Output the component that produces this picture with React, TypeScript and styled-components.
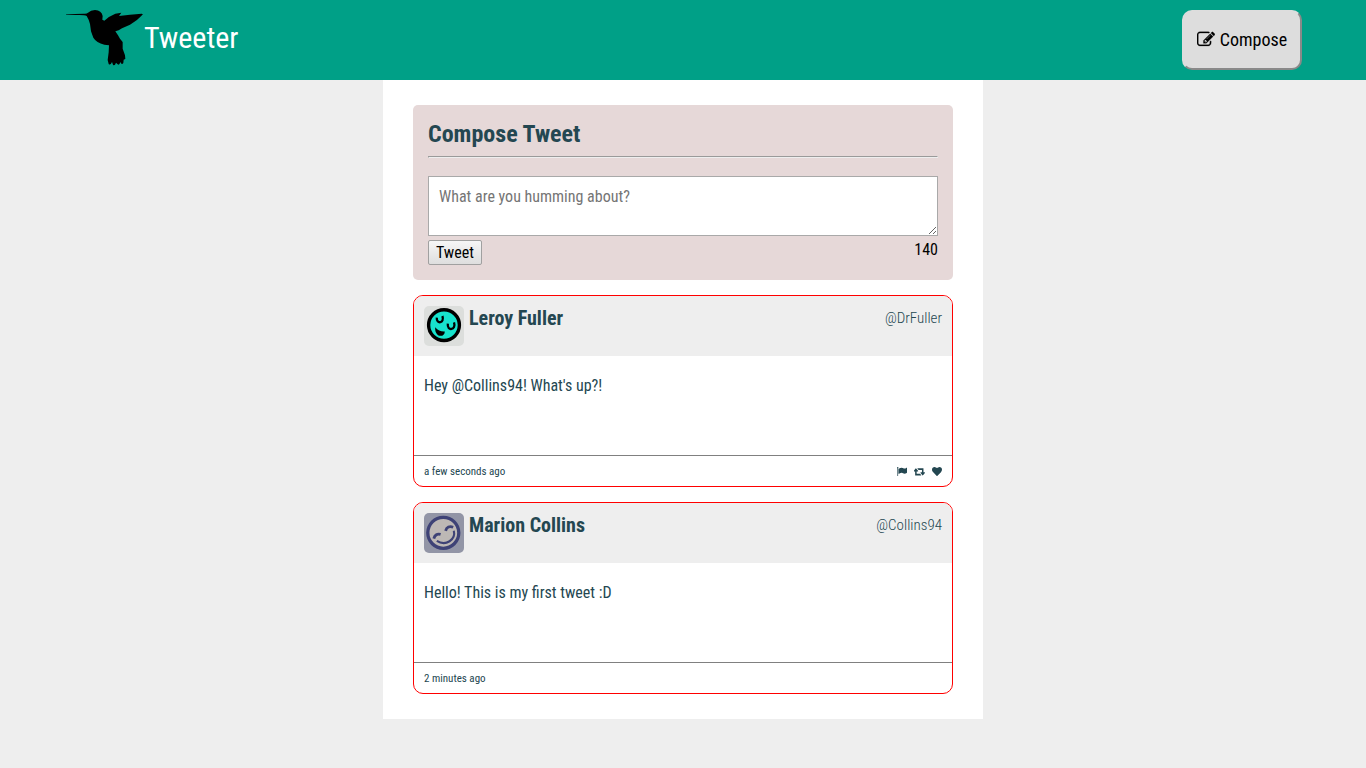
import React from "react";
import styled, { createGlobalStyle } from "styled-components";

const GlobalStyle = createGlobalStyle`
  *, *::before, *::after { box-sizing: border-box; }
  body {
    margin: 0;
    background: #eee;
    color: #244751;
    font-family: "Roboto Condensed", Roboto, "Liberation Sans Narrow", sans-serif;
    font-stretch: 75%;
    font-size: 16px;
  }
`;

const NavBar = styled.nav`
  height: 80px;
  background: #00a087;
  display: flex;
  justify-content: space-between;
  padding: 10px 64px 0 66px;
`;

const Brand = styled.div`
  display: flex;
  color: #fff;
  font-size: 30px;
  line-height: 56px;
  gap: 1px;
`;

const Bird = styled.svg`
  width: 77px;
  height: 56px;
  display: block;
`;

const ComposeButton = styled.button`
  width: 120px;
  height: 60px;
  padding: 0 0 2px;
  display: flex;
  align-items: center;
  justify-content: center;
  gap: 5px;
  border: 2px outset #ddd;
  border-radius: 10px;
  background: #ddd;
  color: #000;
  font: inherit;
  font-stretch: inherit;
  font-size: 18px;
`;

const Container = styled.main`
  width: 600px;
  height: 639px;
  margin: 0 auto;
  padding: 25px 30px;
  background: #fff;
  display: flex;
  flex-direction: column;
  gap: 15px;
`;

const NewTweet = styled.section`
  height: 175px;
  padding: 15px;
  border-radius: 5px;
  background: #e6d8d8;
`;

const Heading = styled.h2`
  margin: 0;
  height: 36px;
  font-size: 24px;
  line-height: 28px;
`;

const Rule = styled.hr`
  margin: 0 0 18px;
  border: 1px inset #eee;
  height: 2px;
`;

const TweetInput = styled.textarea`
  display: block;
  width: 100%;
  height: 60px;
  padding: 10px;
  border: 1px solid #a9a9a9;
  border-radius: 0;
  outline: none;
  font: inherit;
  font-stretch: inherit;
  line-height: 19px;
  &::placeholder { color: #757575; }
`;

const FormFooter = styled.div`
  display: flex;
  justify-content: space-between;
  align-items: flex-start;
  padding-top: 4px;
  color: #000;
`;

const SubmitButton = styled.button`
  width: 54px;
  height: 25px;
  padding: 0;
  border: 1px solid #a0a0a0;
  border-radius: 2px;
  background: linear-gradient(#f6f6f6, #dedede);
  color: #000;
  font: inherit;
  font-stretch: inherit;
`;

const Counter = styled.span`
  line-height: 19px;
`;

const Card = styled.article`
  height: 192px;
  border: 1px solid #f00;
  border-radius: 10px;
  overflow: hidden;
  display: flex;
  flex-direction: column;
`;

const CardHeader = styled.header`
  height: 60px;
  padding: 10px;
  display: flex;
  background: #eee;
`;

const Avatar = styled.svg`
  width: 40px;
  height: 40px;
  border-radius: 5px;
  margin-right: 5px;
`;

const Name = styled.h3`
  margin: 0;
  flex: 1;
  font-size: 20px;
  line-height: 24px;
`;

const Handle = styled.span`
  font-size: 15px;
  font-weight: 300;
  line-height: 24px;
`;

const Message = styled.p`
  margin: 0;
  flex: 1;
  padding: 20px 10px;
  line-height: 19px;
`;

const CardFooter = styled.footer`
  height: 31px;
  padding: 0 10px;
  border-top: 1px solid #808080;
  display: flex;
  justify-content: space-between;
  align-items: center;
  font-size: 11px;
`;

const Actions = styled.span`
  display: flex;
  align-items: center;
  gap: 7px;
`;

const Icon = styled.svg<{ $w: number; $h: number; $weight?: number }>`
  width: ${(p) => p.$w}px;
  height: ${(p) => p.$h}px;
  fill: currentColor;
  stroke: currentColor;
  stroke-width: ${(p) => p.$weight ?? 0};
`;

const LeroyFace = () => (
  <Avatar viewBox="0 0 40 40">
    <rect width="40" height="40" fill="#dcdedc" />
    <circle cx="20" cy="19.1" r="15.4" fill="#17e3cd" stroke="#000" strokeWidth="3.4" />
    <g fill="none" stroke="#000" strokeWidth="2.3">
      <path d="M12.8 11.6C12 18.6 21 17.4 18.4 10" />
      <path d="M23.8 17.6C22.8 25.8 32.6 24 30 16.4" />
    </g>
    <path d="M11.2 21.2C14 24.6 17 25.6 20.8 25.4C20.8 32 10.4 31.8 11.2 21.2Z" />
  </Avatar>
);

const MarionFace = () => (
  <Avatar viewBox="0 0 40 40">
    <rect width="40" height="40" fill="#9295a6" />
    <circle cx="19.3" cy="19.8" r="15.5" fill="#bdb8b5" stroke="#3e4276" strokeWidth="3.3" />
    <g fill="none" stroke="#3e4276">
      <path d="M21.6 17.8C22.6 14 25.6 12.8 29.2 14.2" strokeWidth="2.8" />
      <path d="M9.8 25.6C10.8 21.8 13.2 20.4 16.6 21.4" strokeWidth="2.8" />
      <path d="M29.8 17.8C32 26.5 22 33.6 12.8 27.9" strokeWidth="2.1" />
    </g>
  </Avatar>
);

interface TweetProps {
  name: string;
  handle: string;
  message: string;
  age: string;
  avatar: React.ReactNode;
  actions?: boolean;
}

const Tweet = ({ name, handle, message, age, avatar, actions }: TweetProps) => (
  <Card>
    <CardHeader>
      {avatar}
      <Name>{name}</Name>
      <Handle>{handle}</Handle>
    </CardHeader>
    <Message>{message}</Message>
    <CardFooter>
      <span>{age}</span>
      {actions && (
        <Actions>
          <Icon $w={10} $h={9} viewBox="64 128 1728 1536" preserveAspectRatio="none">
            <path d="M320 256q0 72-64 110v1266q0 13-9.5 22.5t-22.5 9.5h-64q-13 0-22.5-9.5t-9.5-22.5v-1266q-64-38-64-110 0-53 37.5-90.5t90.5-37.5 90.5 37.5 37.5 90.5zm1472 64v763q0 25-12.5 38.5t-39.5 27.5q-215 116-369 116-61 0-123.5-22t-108.5-48-115.5-48-142.5-22q-192 0-464 146-17 9-33 9-26 0-45-19t-19-45v-742q0-32 31-55 21-14 79-43 236-120 421-120 107 0 200 29t219 88q38 19 88 19 54 0 117.5-21t110-47 88-47 54.5-21q26 0 45 19t19 45z" />
          </Icon>
          <Icon $w={11} $h={11} viewBox="0 0 1856 1792" preserveAspectRatio="none">
            <path d="M1216 1504q0 13-9.5 22.5t-22.5 9.5h-960q-8 0-13.5-2t-9-7-5.5-8-3-11.5-1-11.5v-600h-192q-26 0-45-19t-19-45q0-24 15-41l320-384q19-22 49-22t49 22l320 384q15 17 15 41 0 26-19 45t-45 19h-192v384h576q16 0 25 11l160 192q7 10 7 21zm640-416q0 24-15 41l-320 384q-20 23-49 23t-49-23l-320-384q-15-17-15-41 0-26 19-45t45-19h192v-384h-576q-16 0-25-12l-160-192q-7-9-7-20 0-13 9.5-22.5t22.5-9.5h960q8 0 13.5 2t9 7 5.5 8 3 11.5 1 11.5v600h192q26 0 45 19t19 45z" />
          </Icon>
          <Icon $w={10} $h={9} viewBox="0 128 1792 1536" preserveAspectRatio="none">
            <path d="M896 1664q-26 0-44-18l-624-602q-10-8-27.5-26t-55.5-65.5-68-97.5-53.5-121-23.5-138q0-220 127-344t351-124q62 0 126.5 21.5t120 58 95.5 68.5 76 68q36-36 76-68t95.5-68.5 120-58 126.5-21.5q224 0 351 124t127 344q0 221-229 450l-623 600q-18 18-44 18z" />
          </Icon>
        </Actions>
      )}
    </CardFooter>
  </Card>
);

export default function App() {
  return (
    <>
      <GlobalStyle />
      <NavBar>
        <Brand>
          <Bird viewBox="18 18 231 168">
            <path d="M18 31L72 29Q80 30 84 26Q92 18 105 18Q125 20 128 36L127 47L133 50Q148 36 166 29L184 26L177 36Q209 32 245 29Q251 30 246 34Q231 51 210 62L186 73Q176 80 166 82L174 94L180 104L188 114L188 134L195 154L196 165L191 167L190 177Q185 184 181 174Q178 185 173 181L168 176Q164 187 159 182L156 174Q151 185 146 180L143 168L146 145L147 124L133 122Q109 116 100 101L93 82L90 60Q88 49 80 36Q73 32 50 33L18 32Z" />
          </Bird>
          <span>Tweeter</span>
        </Brand>
        <ComposeButton>
          <Icon $w={18} $h={18} $weight={25} viewBox="0 -50 1792 1792">
            <path d="M888 1184l116-116-152-152-116 116v56h96v96h56zm440-720q-16-16-33 1l-350 350q-17 17-1 33t33-1l350-350q17-17 1-33zm80 594v190q0 119-84.5 203.5t-203.5 84.5h-832q-119 0-203.5-84.5t-84.5-203.5v-832q0-119 84.5-203.5t203.5-84.5h832q63 0 117 25 15 7 18 23 3 17-9 29l-49 49q-14 14-32 8-23-6-45-6h-832q-66 0-113 47t-47 113v832q0 66 47 113t113 47h832q66 0 113-47t47-113v-126q0-13 9-22l64-64q15-15 35-7t20 29zm-96-738l288 288-672 672h-288v-288zm444 132l-92 92-288-288 92-92q28-28 68-28t68 28l152 152q28 28 28 68t-28 68z" />
          </Icon>
          <span>Compose</span>
        </ComposeButton>
      </NavBar>
      <Container>
        <NewTweet>
          <Heading>Compose Tweet</Heading>
          <Rule />
          <TweetInput placeholder="What are you humming about?" />
          <FormFooter>
            <SubmitButton>Tweet</SubmitButton>
            <Counter>140</Counter>
          </FormFooter>
        </NewTweet>
        <Tweet
          name="Leroy Fuller"
          handle="@DrFuller"
          message="Hey @Collins94! What's up?!"
          age="a few seconds ago"
          avatar={<LeroyFace />}
          actions
        />
        <Tweet
          name="Marion Collins"
          handle="@Collins94"
          message="Hello! This is my first tweet :D"
          age="2 minutes ago"
          avatar={<MarionFace />}
        />
      </Container>
    </>
  );
}
